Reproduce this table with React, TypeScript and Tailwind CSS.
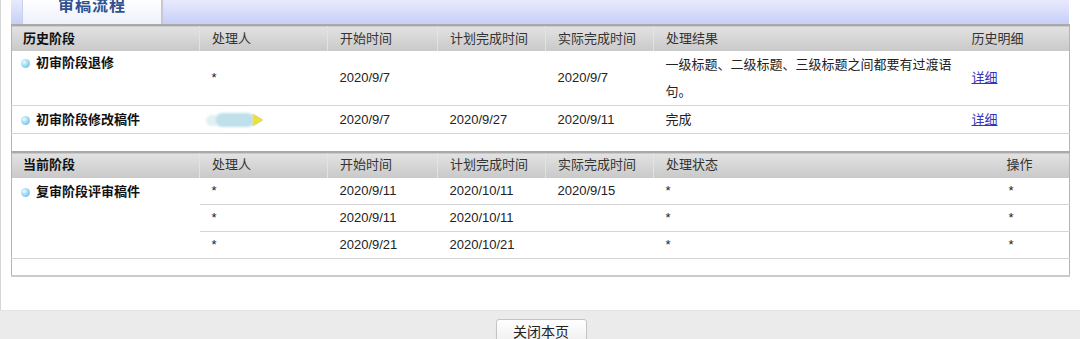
import React from "react";

const font = { fontFamily: '"Liberation Sans", "Noto Sans CJK SC", sans-serif' };

function Dot() {
  return (
    <span className="inline-block w-[9px] h-[9px] rounded-full bg-[radial-gradient(circle_at_35%_35%,#eefaff_0%,#9edaf5_45%,#5ab8e4_100%)] mr-[6px] align-[-1px]" />
  );
}

function Blur() {
  return (
    <span className="relative inline-flex items-center h-[14px] w-[60px] align-middle">
      <span className="absolute left-[0px] top-[2px] w-[14px] h-[11px] rounded-full bg-[#e2f0f4] blur-[1px]" />
      <span className="absolute left-[10px] top-[0px] w-[38px] h-[14px] rounded-[6px] bg-[#bfe0ea] blur-[1px]" />
      <svg className="absolute left-[46px] top-[0px]" width="12" height="14" viewBox="0 0 12 14">
        <polygon points="1,1 11,7 1,13" fill="#e6e43a" stroke="#e8d890" strokeWidth="1" />
      </svg>
    </span>
  );
}

const headTh = "text-left font-normal text-[#333] px-[12px] border-l border-[#e2e2e2] first:border-l-0";

function HeaderRow({ cols, last }: { cols: string[]; last: React.ReactNode }) {
  return (
    <tr className="h-[26px] bg-[linear-gradient(#e2e2e2,#c9c9c9)] border-t-2 border-[#a9a9a9]">
      <th className="text-left font-bold text-[#111] pl-[11px]">{cols[0]}</th>
      {cols.slice(1).map((c) => (
        <th key={c} className={headTh}>{c}</th>
      ))}
      {last}
    </tr>
  );
}

const td = "px-[12px] text-[#222] align-middle";

export default function App() {
  return (
    <div className="w-[1080px] h-[339px] bg-white overflow-hidden text-[13px]" style={font}>
      <div className="h-[310px] border-l border-[#d6d6d6] pl-[10px] pr-[11px]">
        {/* tab bar */}
        <div className="h-[24px] bg-[linear-gradient(#e8eafc,#c7cff8)] flex pl-[11px]">
          <div className="w-[141px] h-[24px] bg-[linear-gradient(#ffffff,#eef0fb)] border-l border-[#c9cfee] border-r-2 border-r-[#c8c8d4] flex justify-center">
            <span className="text-[16px] font-bold text-[#2f5191] leading-[16px] -mt-[2px] tracking-[1px]">审稿流程</span>
          </div>
        </div>

        <table className="w-[1058px] table-fixed border-collapse border-l border-r border-b-2 border-[#b4b4b4] border-b-[#cbcbcb]">
          <colgroup>
            <col className="w-[188px]" />
            <col className="w-[128px]" />
            <col className="w-[110px]" />
            <col className="w-[108px]" />
            <col className="w-[108px]" />
            <col className="w-[307px]" />
            <col className="w-[109px]" />
          </colgroup>
          <tbody>
            <HeaderRow
              cols={["历史阶段", "处理人", "开始时间", "计划完成时间", "实际完成时间", "处理结果"]}
              last={<th className="text-left font-normal text-[#333] pl-[11px]">历史明细</th>}
            />
            <tr className="h-[53px] border-b border-[#d4d4d4]">
              <td className="align-top pl-[9px] pt-[2px] font-bold text-[#111]">
                <Dot />初审阶段退修
              </td>
              <td className={td}>*</td>
              <td className={td}>2020/9/7</td>
              <td className={td}></td>
              <td className={td}>2020/9/7</td>
              <td className="pl-[12px] pr-[2px] text-[#222] leading-[27px] align-middle">
                一级标题、二级标题、三级标题之间都要有过渡语句。
              </td>
              <td className="pl-[11px] align-middle">
                <a className="text-[#3535b8] underline">详细</a>
              </td>
            </tr>
            <tr className="h-[28px] border-b border-[#d4d4d4]">
              <td className="pl-[9px] font-bold text-[#111]">
                <Dot />初审阶段修改稿件
              </td>
              <td className="pl-[6px]"><Blur /></td>
              <td className={td}>2020/9/7</td>
              <td className={td}>2020/9/27</td>
              <td className={td}>2020/9/11</td>
              <td className={td}>完成</td>
              <td className="pl-[11px]">
                <a className="text-[#3535b8] underline">详细</a>
              </td>
            </tr>
            <tr className="h-[18px]"><td colSpan={7}></td></tr>

            <HeaderRow
              cols={["当前阶段", "处理人", "开始时间", "计划完成时间", "实际完成时间", "处理状态"]}
              last={<th className="text-left font-normal text-[#333] pl-[46px]">操作</th>}
            />
            {[
              ["2020/9/11", "2020/10/11", "2020/9/15"],
              ["2020/9/11", "2020/10/11", ""],
              ["2020/9/21", "2020/10/21", ""],
            ].map((r, i) => (
              <tr key={i} className="h-[27px] border-b border-[#d4d4d4]">
                {i === 0 && (
                  <td rowSpan={3} className="align-top pl-[9px] pt-[4px] font-bold text-[#111] border-b border-[#d4d4d4]">
                    <Dot />复审阶段评审稿件
                  </td>
                )}
                <td className={td}>*</td>
                <td className={td}>{r[0]}</td>
                <td className={td}>{r[1]}</td>
                <td className={td}>{r[2]}</td>
                <td className={td}>*</td>
                <td className="pl-[48px] text-[#222]">*</td>
              </tr>
            ))}
            <tr className="h-[17px]"><td colSpan={7}></td></tr>
          </tbody>
        </table>
      </div>

      {/* footer */}
      <div className="h-[29px] bg-[#ebebeb] border-t border-[#e2e2e2] flex justify-center pt-[8px]">
        <button className="w-[91px] h-[26px] rounded-[3px] border border-[#c4c4c4] bg-[linear-gradient(#ffffff,#eeeeee)] text-[14px] text-[#222] leading-[24px] shadow-[0_1px_1px_rgba(0,0,0,0.08)] ml-[2px]">
          关闭本页
        </button>
      </div>
    </div>
  );
}
